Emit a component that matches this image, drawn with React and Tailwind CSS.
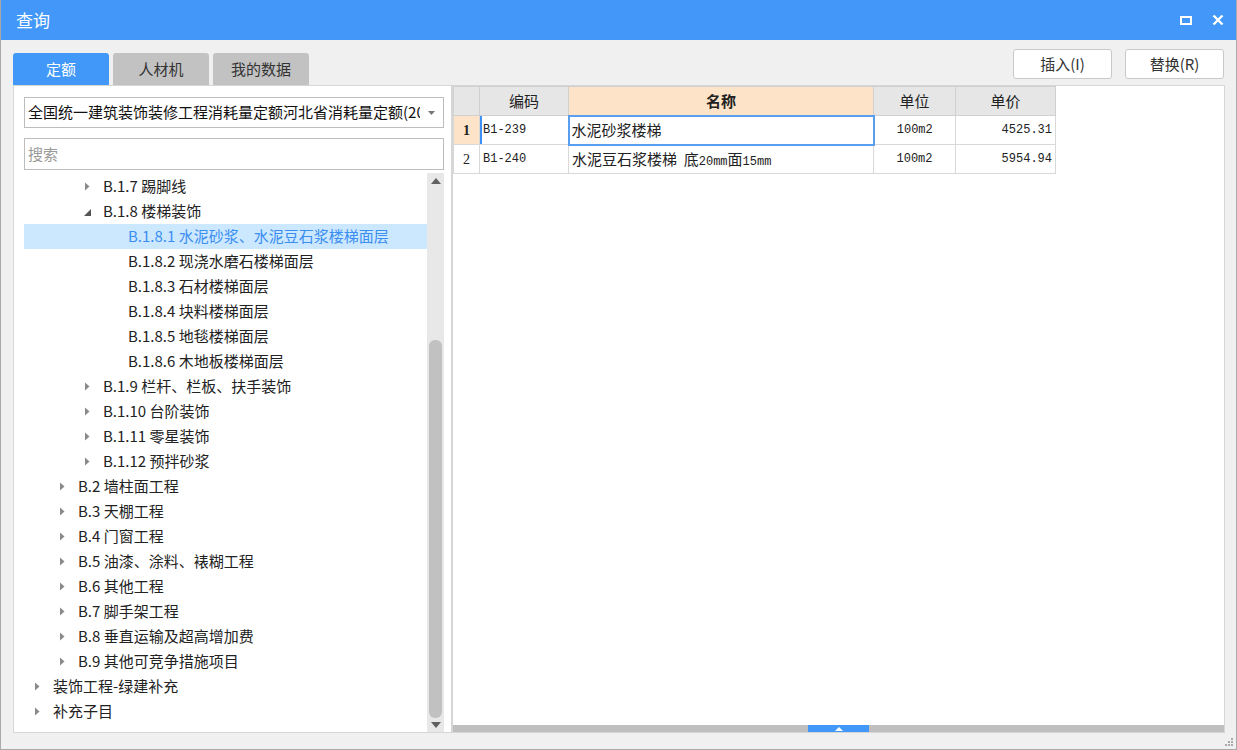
const font = { fontFamily: '"Noto Sans CJK SC", "Noto Sans", sans-serif' };

const treeRows = [
  { lvl: 3, icon: "closed", text: "B.1.7 踢脚线" },
  { lvl: 3, icon: "open", text: "B.1.8 楼梯装饰" },
  { lvl: 4, text: "B.1.8.1 水泥砂浆、水泥豆石浆楼梯面层", selected: true },
  { lvl: 4, text: "B.1.8.2 现浇水磨石楼梯面层" },
  { lvl: 4, text: "B.1.8.3 石材楼梯面层" },
  { lvl: 4, text: "B.1.8.4 块料楼梯面层" },
  { lvl: 4, text: "B.1.8.5 地毯楼梯面层" },
  { lvl: 4, text: "B.1.8.6 木地板楼梯面层" },
  { lvl: 3, icon: "closed", text: "B.1.9 栏杆、栏板、扶手装饰" },
  { lvl: 3, icon: "closed", text: "B.1.10 台阶装饰" },
  { lvl: 3, icon: "closed", text: "B.1.11 零星装饰" },
  { lvl: 3, icon: "closed", text: "B.1.12 预拌砂浆" },
  { lvl: 2, icon: "closed", text: "B.2 墙柱面工程" },
  { lvl: 2, icon: "closed", text: "B.3 天棚工程" },
  { lvl: 2, icon: "closed", text: "B.4 门窗工程" },
  { lvl: 2, icon: "closed", text: "B.5 油漆、涂料、裱糊工程" },
  { lvl: 2, icon: "closed", text: "B.6 其他工程" },
  { lvl: 2, icon: "closed", text: "B.7 脚手架工程" },
  { lvl: 2, icon: "closed", text: "B.8 垂直运输及超高增加费" },
  { lvl: 2, icon: "closed", text: "B.9 其他可竞争措施项目" },
  { lvl: 1, icon: "closed", text: "装饰工程-绿建补充" },
  { lvl: 1, icon: "closed", text: "补充子目" },
];

const indent = { 1: "pl-[10px]", 2: "pl-[35px]", 3: "pl-[60px]", 4: "pl-[86px]" };

function Arrow({ type }) {
  if (type === "open") {
    return (
      <svg width="7" height="7" viewBox="0 0 7 7" className="mr-[12px] mt-[2px]">
        <path d="M7 0 L7 7 L0 7 Z" fill="#555" />
      </svg>
    );
  }
  if (type === "closed") {
    return (
      <svg width="7" height="9" viewBox="0 0 7 9" className="mr-[12px]">
        <path d="M1 0.5 L5.5 4.5 L1 8.5 Z" fill="#8a8a8a" />
      </svg>
    );
  }
  return <span className="w-[18px]" />;
}

const mono = { fontFamily: '"Liberation Mono", "DejaVu Sans Mono", monospace' };
const serif = { fontFamily: '"Liberation Serif", serif' };

export default function App() {
  return (
    <div
      style={font}
      className="w-[1237px] h-[750px] flex flex-col bg-[#f0f0f0] border-x border-b border-[#a9a9a9] overflow-hidden"
    >
      {/* title bar */}
      <div className="h-[40px] shrink-0 bg-[#4297f8] flex items-center pl-[15px] pr-[12px]">
        <span className="text-white text-[17px]">查询</span>
        <div className="ml-auto flex items-center gap-[20px]">
          <div className="w-[12px] h-[9px] border-2 border-white" />
          <svg width="12" height="12" viewBox="0 0 12 12">
            <path d="M1.5 1.5 L10.5 10.5 M10.5 1.5 L1.5 10.5" stroke="white" strokeWidth="2.4" />
          </svg>
        </div>
      </div>

      {/* tabs + buttons */}
      <div className="h-[45px] shrink-0 flex pl-[12px] pr-[12px]">
        <div className="flex items-end gap-[4px]">
          <div className="w-[96px] h-[32px] rounded-t-[3px] bg-[#4198f8] text-white text-[15px] flex items-center justify-center">
            定额
          </div>
          <div className="w-[96px] h-[32px] rounded-t-[3px] bg-[#c2c2c2] text-[#333] text-[15px] flex items-center justify-center">
            人材机
          </div>
          <div className="w-[96px] h-[32px] rounded-t-[3px] bg-[#c2c2c2] text-[#333] text-[15px] flex items-center justify-center">
            我的数据
          </div>
        </div>
        <div className="ml-auto flex gap-[13px] pt-[9px]">
          <button className="w-[99px] h-[30px] bg-white border border-[#c9c9c9] rounded-[3px] text-[15px] text-[#333]">
            插入(I)
          </button>
          <button className="w-[99px] h-[30px] bg-white border border-[#c9c9c9] rounded-[3px] text-[15px] text-[#333]">
            替换(R)
          </button>
        </div>
      </div>

      {/* content */}
      <div className="flex h-[648px] pl-[12px] pr-[11px]">
        {/* left panel */}
        <div className="w-[439px] bg-white border border-[#d6d6d6] flex flex-col pl-[10px] pr-[7px]">
          <div className="mt-[11px] h-[31px] border border-[#bdbdbd] flex items-center pl-[3px] pr-[8px]">
            <span className="text-[15px] text-[#111] whitespace-nowrap overflow-hidden flex-1">
              全国统一建筑装饰装修工程消耗量定额河北省消耗量定额(2012)
            </span>
            <svg width="7" height="4" viewBox="0 0 7 4" className="ml-[8px]">
              <path d="M0 0 L7 0 L3.5 4 Z" fill="#777" />
            </svg>
          </div>
          <div className="mt-[10px] h-[32px] border border-[#bdbdbd] flex items-center pl-[3px]">
            <span className="text-[15px] text-[#999]">搜索</span>
          </div>
          <div className="flex flex-1 mt-[3px] min-h-0">
            <div className="flex-1 pt-[1px]">
              {treeRows.map((r, i) => (
                <div
                  key={i}
                  className={`h-[25px] flex items-center ${indent[r.lvl]} ${r.selected ? "bg-[#cce8ff] text-[#3b8ef0]" : "text-[#222]"}`}
                >
                  <Arrow type={r.icon} />
                  <span className="text-[15px] whitespace-nowrap">{r.text}</span>
                </div>
              ))}
            </div>
            <div className="w-[17px] bg-[#e8e8e8] flex flex-col items-center pb-[1px]">
              <svg width="10" height="6" viewBox="0 0 10 6" className="mt-[5px]">
                <path d="M0 6 L5 0 L10 6 Z" fill="#606060" />
              </svg>
              <div className="flex-1 w-full flex flex-col justify-end px-[2px]">
                <div className="h-[378px] bg-[#c1c1c1] rounded-[6px] mb-[4px]" />
              </div>
              <svg width="10" height="6" viewBox="0 0 10 6" className="mb-[3px]">
                <path d="M0 0 L10 0 L5 6 Z" fill="#606060" />
              </svg>
            </div>
          </div>
        </div>

        {/* right panel */}
        <div className="flex-1 bg-white border border-[#d6d6d6] flex flex-col">
          <div className="flex-1">
            <table className="border-collapse text-[#222]" style={{ tableLayout: "fixed" }}>
              <colgroup>
                <col style={{ width: 26 }} />
                <col style={{ width: 89 }} />
                <col style={{ width: 305 }} />
                <col style={{ width: 82 }} />
                <col style={{ width: 100 }} />
              </colgroup>
              <thead>
                <tr className="h-[29px] text-[15px]">
                  <th className="bg-[#e6e6e6] border border-[#d0d0d0] font-normal" />
                  <th className="bg-[#e6e6e6] border border-[#d0d0d0] font-normal">编码</th>
                  <th className="bg-[#fde4c8] border border-[#d0d0d0] font-bold">名称</th>
                  <th className="bg-[#e6e6e6] border border-[#d0d0d0] font-normal">单位</th>
                  <th className="bg-[#e6e6e6] border border-[#d0d0d0] font-normal">单价</th>
                </tr>
              </thead>
              <tbody>
                <tr className="h-[29px]">
                  <td className="bg-[#fde4c8] border border-[#d8d8d8] text-center text-[14px] font-bold" style={serif}>1</td>
                  <td className="border border-[#d8d8d8] pl-[3px] text-[12px] shadow-[inset_2px_0_0_#3c8ff5]" style={mono}>B1-239</td>
                  <td className="border-2 border-[#5a9ef0] pl-[2px] text-[15px]">水泥砂浆楼梯</td>
                  <td className="border border-[#d8d8d8] text-center text-[12px]" style={mono}>100m2</td>
                  <td className="border border-[#d8d8d8] text-right pr-[3px] text-[12px]" style={mono}>4525.31</td>
                </tr>
                <tr className="h-[29px]">
                  <td className="border border-[#d8d8d8] text-center text-[14px]" style={serif}>2</td>
                  <td className="border border-[#d8d8d8] pl-[3px] text-[12px]" style={mono}>B1-240</td>
                  <td className="border border-[#d8d8d8] pl-[3px] text-[15px] whitespace-nowrap">
                    水泥豆石浆楼梯&nbsp;&nbsp;底<span className="text-[12px]" style={mono}>20mm</span>面<span className="text-[12px]" style={mono}>15mm</span>
                  </td>
                  <td className="border border-[#d8d8d8] text-center text-[12px]" style={mono}>100m2</td>
                  <td className="border border-[#d8d8d8] text-right pr-[3px] text-[12px]" style={mono}>5954.94</td>
                </tr>
              </tbody>
            </table>
          </div>
          <div className="h-[7px] bg-[#bfbfbf] flex">
            <div className="w-[355px]" />
            <div className="w-[61px] bg-[#4198f8] flex items-center justify-center">
              <svg width="8" height="4" viewBox="0 0 8 4">
                <path d="M0 4 L4 0 L8 4 Z" fill="white" />
              </svg>
            </div>
          </div>
        </div>
      </div>

      {/* footer with grip */}
      <div className="flex-1 flex justify-end items-end pr-[3px] pb-[3px]">
        <svg width="9" height="9" viewBox="0 0 9 9">
          <rect x="7" y="1" width="2" height="2" fill="#aaa" />
          <rect x="4" y="4" width="2" height="2" fill="#aaa" />
          <rect x="7" y="4" width="2" height="2" fill="#aaa" />
          <rect x="1" y="7" width="2" height="2" fill="#aaa" />
          <rect x="4" y="7" width="2" height="2" fill="#aaa" />
          <rect x="7" y="7" width="2" height="2" fill="#aaa" />
        </svg>
      </div>
    </div>
  );
}
